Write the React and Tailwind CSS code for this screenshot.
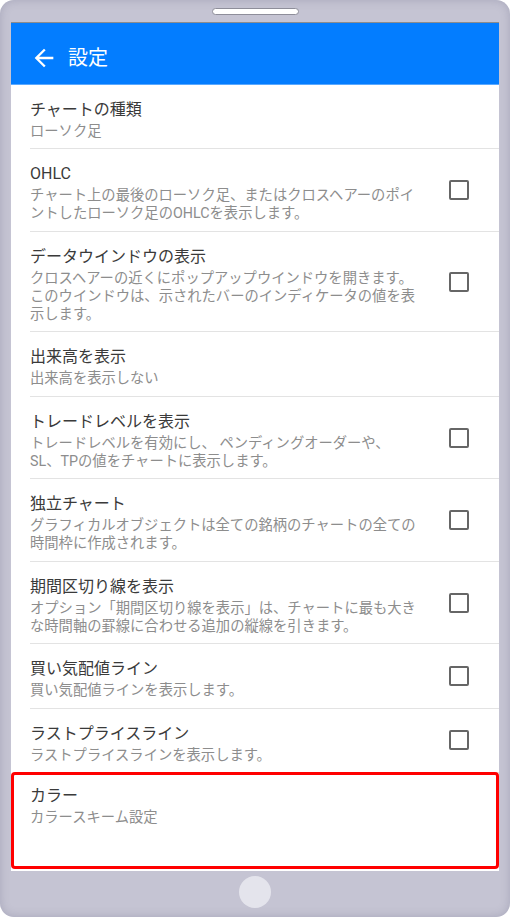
import React from 'react';

const items = [
    { title: 'チャートの種類', desc: ['ローソク足'], check: false },
    {
        title: 'OHLC',
        desc: ['チャート上の最後のローソク足、またはクロスヘアーのポイ', 'ントしたローソク足のOHLCを表示します。'],
        check: true,
    },
    {
        title: 'データウインドウの表示',
        desc: [
            'クロスヘアーの近くにポップアップウインドウを開きます。',
            'このウインドウは、示されたバーのインディケータの値を表',
            '示します。',
        ],
        check: true,
    },
    { title: '出来高を表示', desc: ['出来高を表示しない'], check: false },
    {
        title: 'トレードレベルを表示',
        desc: ['トレードレベルを有効にし、 ペンディングオーダーや、', 'SL、TPの値をチャートに表示します。'],
        check: true,
    },
    {
        title: '独立チャート',
        desc: ['グラフィカルオブジェクトは全ての銘柄のチャートの全ての', '時間枠に作成されます。'],
        check: true,
    },
    {
        title: '期間区切り線を表示',
        desc: ['オプション「期間区切り線を表示」は、チャートに最も大き', 'な時間軸の罫線に合わせる追加の縦線を引きます。'],
        check: true,
    },
    { title: '買い気配値ライン', desc: ['買い気配値ラインを表示します。'], check: true },
    { title: 'ラストプライスライン', desc: ['ラストプライスラインを表示します。'], check: true },
];

const font = { fontFamily: 'Roboto, "Noto Sans CJK JP", sans-serif' };

const SettingRow = ({ title, desc, check }) => (
    <div className="pl-[19px]">
        <div className="flex items-center border-b border-[#e3e3e3]">
            <div className="w-[394px] pt-[12px] pb-[8.3px]">
                <div className="text-[16px] leading-[25px] text-[#3a3a3a]">{title}</div>
                <div className="text-[14.3px] leading-[18.1px] text-[#8d8d8d]">
                    {desc.map((line, i) => (
                        <div key={i}>{line}</div>
                    ))}
                </div>
            </div>
            {check && <div className="ml-[25px] w-[20px] h-[20px] border-2 border-[#666666] rounded-[2px]" />}
        </div>
    </div>
);

export default function App() {
    return (
        <div className="w-[510px] h-[919px] bg-white" style={font}>
            <div className="w-[510px] h-[917px] rounded-[14px] bg-[#c5c4d3] shadow-[inset_0_0_10px_rgba(80,80,110,0.25)] flex flex-col px-[11px]">
                {/* speaker */}
                <div className="h-[22px] flex justify-center pt-[8px]">
                    <div className="w-[87px] h-[7px] rounded-full bg-white border border-[#8e8e9a]" />
                </div>

                {/* screen */}
                <div className="flex-1 bg-white flex flex-col overflow-hidden border-t border-[#8c8c8c]">
                    <div className="h-[62px] bg-[#037dff] border-b border-[#5aa9ff] flex items-center pl-[19px] pt-[8px]">
                        <svg width="28" height="28" viewBox="0 0 24 24" fill="white">
                            <path d="M20 11H7.83l5.59-5.59L12 4l-8 8 8 8 1.41-1.41L7.83 13H20v-2z" />
                        </svg>
                        <span className="ml-[10px] text-[20px] text-white">設定</span>
                    </div>

                    {items.map((item) => (
                        <SettingRow key={item.title} {...item} />
                    ))}

                    <div className="flex-1 mb-[2px] -mt-[1px] border-[3px] border-[#ff0000] rounded-[4px] pl-[16px] pt-[8px]">
                        <div className="text-[16px] leading-[25px] text-[#3a3a3a]">カラー</div>
                        <div className="text-[14.3px] leading-[18.1px] text-[#8d8d8d]">カラースキーム設定</div>
                    </div>
                </div>

                {/* home button */}
                <div className="h-[46px] flex justify-center pt-[5px]">
                    <div className="w-[32px] h-[32px] rounded-full bg-[#e4e4ec]" />
                </div>
            </div>
        </div>
    );
}
